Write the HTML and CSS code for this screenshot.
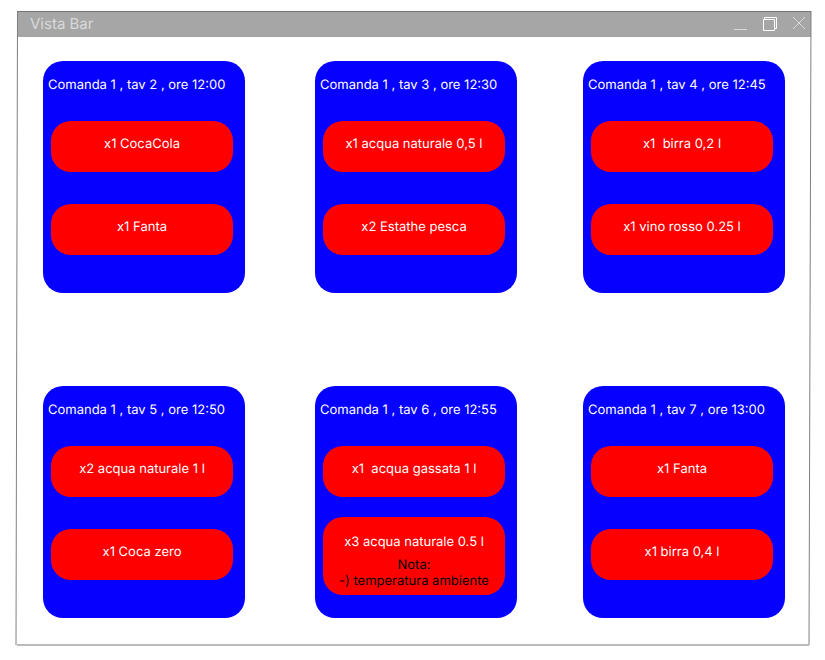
FILE: index.html
```html
<!DOCTYPE html>
<html lang="it">
<head>
<meta charset="utf-8">
<meta name="viewport" content="width=device-width, initial-scale=1">
<title>Vista Bar</title>
<link rel="stylesheet" href="styles.css">
</head>
<body>
<div class="window">
  <header class="titlebar">
    <h1 class="title">Vista Bar</h1>
    <div class="controls">
      <button class="control" type="button" aria-label="Riduci a icona">
        <svg width="16" height="16" viewBox="0 0 16 16"><path d="M1 13.5H14" stroke="#d9d9d9"/></svg>
      </button>
      <button class="control" type="button" aria-label="Ingrandisci">
        <svg width="16" height="16" viewBox="0 0 16 16" fill="none" stroke="#fff"><path d="M1.500 3.500H12.500V14.500H1.500Z"/><path d="M2.500 3V1.500H14.500V12.500H13"/></svg>
      </button>
      <button class="control" type="button" aria-label="Chiudi">
        <svg width="16" height="16" viewBox="0 0 16 16"><path d="M2 1L14 13M14 1L2 13" stroke="#d9d9d9"/></svg>
      </button>
    </div>
  </header>
  <main class="orders">
    <section class="order">
      <h2 class="order-title">Comanda 1 , tav 2 , ore 12:00</h2>
      <ul class="items">
        <li class="item">x1 CocaCola</li>
        <li class="item">x1 Fanta</li>
      </ul>
    </section>
    <section class="order">
      <h2 class="order-title">Comanda 1 , tav 3 , ore 12:30</h2>
      <ul class="items">
        <li class="item">x1 acqua naturale 0,5 l</li>
        <li class="item">x2 Estathe pesca</li>
      </ul>
    </section>
    <section class="order">
      <h2 class="order-title">Comanda 1 , tav 4 , ore 12:45</h2>
      <ul class="items">
        <li class="item">x1  birra 0,2 l</li>
        <li class="item">x1 vino rosso 0.25 l</li>
      </ul>
    </section>
    <section class="order">
      <h2 class="order-title">Comanda 1 , tav 5 , ore 12:50</h2>
      <ul class="items">
        <li class="item">x2 acqua naturale 1 l</li>
        <li class="item">x1 Coca zero</li>
      </ul>
    </section>
    <section class="order">
      <h2 class="order-title">Comanda 1 , tav 6 , ore 12:55</h2>
      <ul class="items">
        <li class="item">x1  acqua gassata 1 l</li>
        <li class="item item-noted">x3 acqua naturale 0.5 l<p class="note">Nota:<br>-) temperatura ambiente</p></li>
      </ul>
    </section>
    <section class="order">
      <h2 class="order-title">Comanda 1 , tav 7 , ore 13:00</h2>
      <ul class="items">
        <li class="item">x1 Fanta</li>
        <li class="item">x1 birra 0,4 l</li>
      </ul>
    </section>
  </main>
  <svg class="frame" aria-hidden="true">
    <line x1="0.5" y1="0" x2="-1" y2="100%" stroke="#808080"/>
    <line x1="100%" y1="0" x2="99.750%" y2="100%" stroke="#808080"/>
    <line x1="0" y1="0.5" x2="100%" y2="0.5" stroke="#757575"/>
    <line x1="0" y1="100%" x2="99.750%" y2="100%" stroke="#bababa" stroke-width="2"/>
  </svg>
</div>
</body>
</html>
```
FILE: styles.css
```css
* {
  box-sizing: border-box;
}

body {
  margin: 0;
  padding: 11px 14px 15px 17px;
  background: #fff;
  font-family: Inter, "Liberation Sans", sans-serif;
  font-size: 13px;
  line-height: 16px;
  text-rendering: geometricPrecision;
}

.window {
  position: relative;
  min-height: calc(100vh - 26px);
}

.frame {
  position: absolute;
  inset: 0;
  width: 100%;
  height: 100%;
  overflow: visible;
  pointer-events: none;
}

.titlebar {
  display: flex;
  align-items: center;
  justify-content: space-between;
  height: 26px;
  padding: 0 4px 0 13px;
  background: #a6a6a6;
}

.title {
  margin: 0;
  color: #d9d9d9;
  font-size: 15px;
  font-weight: 400;
}

.controls {
  display: flex;
  gap: 13px;
}

.control {
  width: 16px;
  height: 16px;
  padding: 0;
  border: 0;
  background: none;
}

.control svg {
  display: block;
}

.orders {
  display: grid;
  grid-template-columns: minmax(202px, 272fr) minmax(202px, 268fr) 202px;
  row-gap: 93px;
  padding: 24px 26px;
}

.order {
  width: 202px;
  min-height: 232px;
  padding: 16px 5px;
  border-radius: 20px;
  background: #0500ff;
  color: #fff;
}

.order-title {
  margin: 0;
  font-size: 13px;
  font-weight: 400;
}

.items {
  display: flex;
  flex-direction: column;
  gap: 32px;
  margin: 28px 7px 0 3px;
  padding: 0;
  list-style: none;
}

.item {
  min-height: 51px;
  padding: 15px 0;
  border-radius: 20px;
  background: #f00;
  text-align: center;
  white-space: pre-wrap;
}

.item-noted {
  margin-top: -12px;
  padding: 17px 0 6px;
}

.note {
  margin: 7px 0 0;
  color: #000;
}
```
